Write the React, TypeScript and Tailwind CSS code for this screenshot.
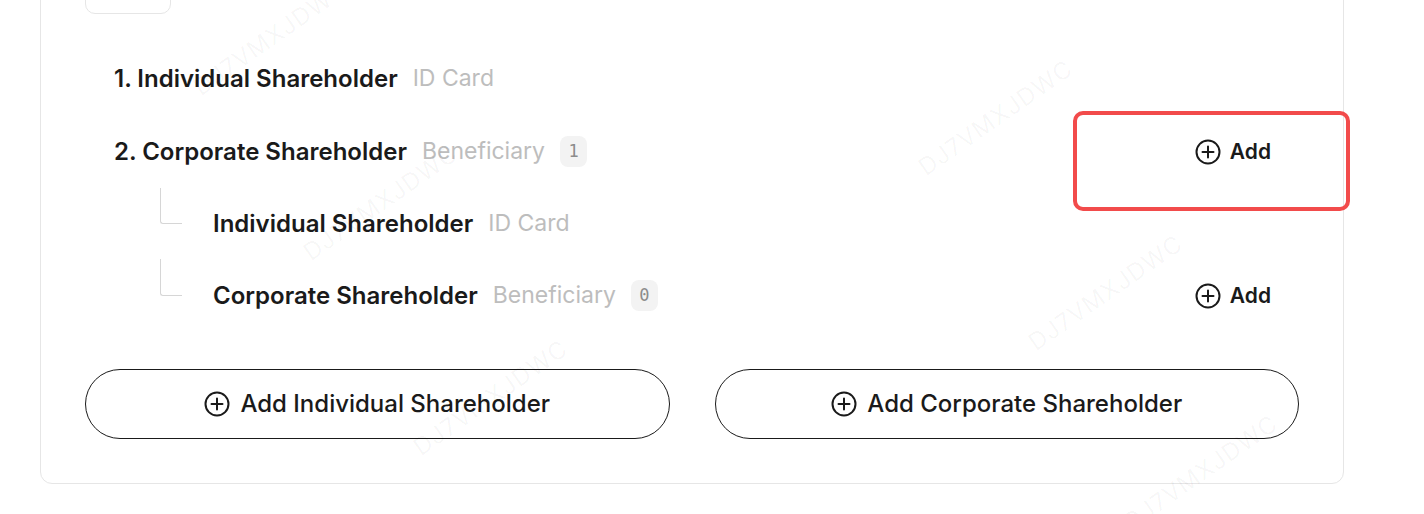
const PlusCircle = ({ size = 26 }: { size?: number }) => (
  <svg width={size} height={size} viewBox="0 0 26 26" fill="none" stroke="#1a1a1a" strokeWidth="2" strokeLinecap="round">
    <circle cx="13" cy="13" r="11.5" />
    <path d="M13 7.5v11M7.5 13h11" />
  </svg>
);

const Badge = ({ n }: { n: number }) => (
  <span className="ml-[15px] inline-flex h-[31px] w-[27px] items-center justify-center rounded-[8px] bg-[#f3f3f3] font-['DejaVu_Sans_Mono',monospace] text-[17px] text-[#8c8c8c]">
    {n}
  </span>
);

const AddLink = () => (
  <button className="flex items-center gap-[9px] text-[21px] font-semibold text-[#1a1a1a]">
    <PlusCircle size={26} />
    Add
  </button>
);

const marks = [
  { l: 180, t: 20 },
  { l: 290, t: 185 },
  { l: 905, t: 100 },
  { l: 1015, t: 275 },
  { l: 400, t: 380 },
  { l: 1110, t: 455 },
];

export default function App() {
  return (
    <div className="relative h-[514px] w-[1424px] overflow-hidden bg-white font-['Inter',sans-serif] text-[#1a1a1a]">
      <div className="-mt-[44px] ml-[40px] w-[1304px] rounded-[12px] border border-[#e6e6e6] pb-[44px] pl-[44px] pr-[44px] pt-[20px]">
        <div className="h-[37px] w-[86px] rounded-[10px] border border-[#e6e6e6]" />

        <div className="mt-[28px] pl-[29px] pr-[28px]">
          <div className="flex h-[73px] items-center">
            <span className="text-[24px] font-semibold">1. Individual Shareholder</span>
            <span className="ml-[15px] text-[23px] text-[#bdbdbd]">ID Card</span>
          </div>

          <div className="flex h-[73px] items-center">
            <span className="text-[24px] font-semibold">2. Corporate Shareholder</span>
            <span className="ml-[15px] text-[23px] text-[#bdbdbd]">Beneficiary</span>
            <Badge n={1} />
            <div className="ml-auto">
              <AddLink />
            </div>
          </div>

          <div className="flex h-[71px] items-center pl-[46px]">
            <div className="h-[36px] w-[22px] self-start rounded-bl-[3px] border-b border-l border-[#d6d6d6]" />
            <span className="ml-[31px] text-[24px] font-semibold">Individual Shareholder</span>
            <span className="ml-[15px] text-[23px] text-[#bdbdbd]">ID Card</span>
          </div>

          <div className="flex h-[73px] items-center pl-[46px]">
            <div className="h-[37px] w-[22px] self-start rounded-bl-[3px] border-b border-l border-[#d6d6d6]" />
            <span className="ml-[31px] text-[24px] font-semibold">Corporate Shareholder</span>
            <span className="ml-[15px] text-[23px] text-[#bdbdbd]">Beneficiary</span>
            <Badge n={0} />
            <div className="ml-auto">
              <AddLink />
            </div>
          </div>
        </div>

        <div className="mt-[37px] grid grid-cols-2 gap-[45px]">
          <button className="flex h-[70px] items-center justify-center gap-[10px] rounded-full border border-[#1a1a1a] text-[24px] font-medium">
            <PlusCircle size={26} />
            Add Individual Shareholder
          </button>
          <button className="flex h-[70px] items-center justify-center gap-[10px] rounded-full border border-[#1a1a1a] text-[24px] font-medium">
            <PlusCircle size={26} />
            Add Corporate Shareholder
          </button>
        </div>
      </div>

      {/* highlight annotation */}
      <div className="pointer-events-none absolute left-[1073px] top-[111px] h-[100px] w-[277px] rounded-[10px] border-[4px] border-[#f24b4b]" />

      {/* watermark */}
      {marks.map((m, i) => (
        <span
          key={i}
          className="pointer-events-none absolute -rotate-[35deg] select-none text-[24px] tracking-[1px] text-black/[0.04]"
          style={{ left: m.l, top: m.t }}
        >
          DJ7VMXJDWC
        </span>
      ))}
    </div>
  );
}
